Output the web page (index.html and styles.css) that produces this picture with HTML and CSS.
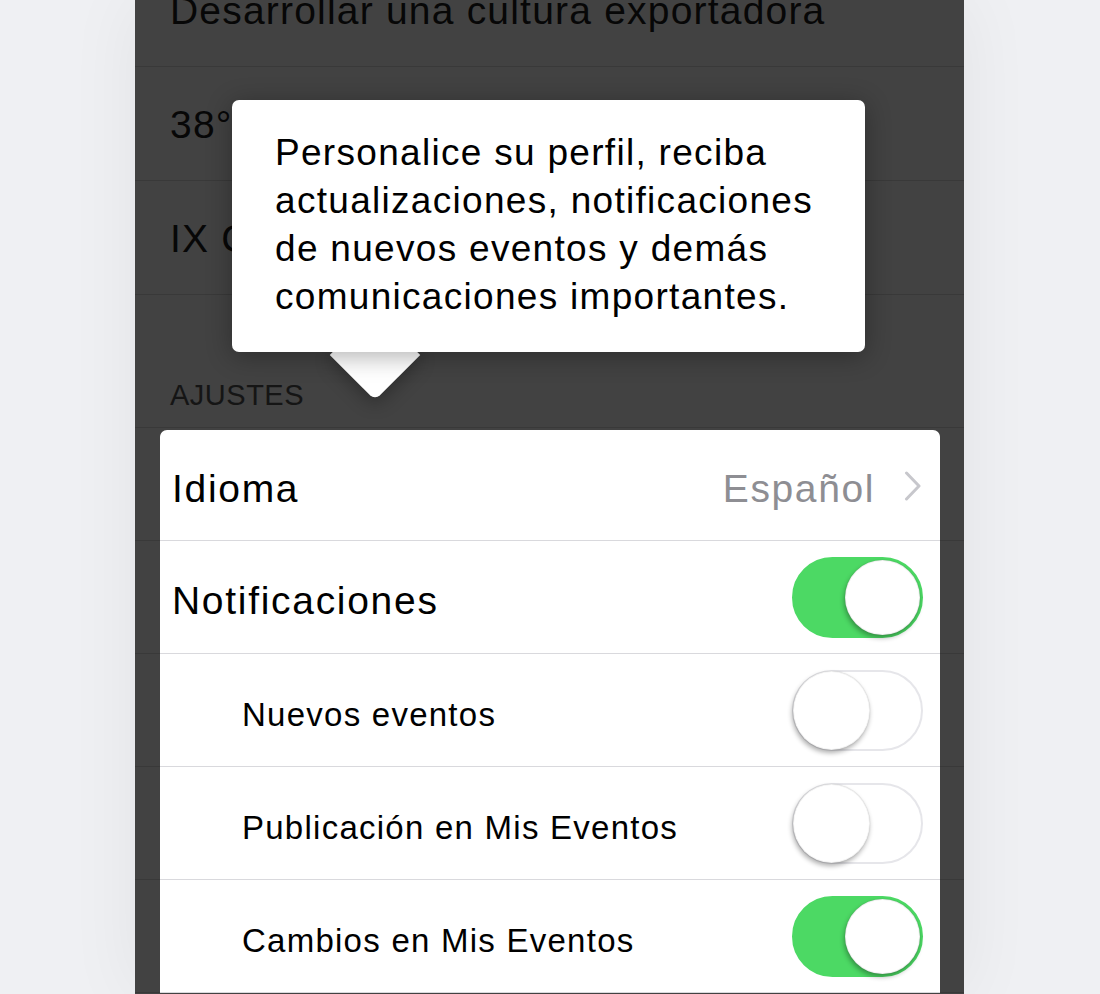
FILE: index.html
```html
<!DOCTYPE html>
<html lang="es">
<head>
<meta charset="utf-8">
<title>Ajustes</title>
<link rel="stylesheet" href="styles.css">
</head>
<body>
<div class="screen">
  <div class="list">
    <div class="drow drow-first">Desarrollar una cultura exportadora</div>
    <div class="drow">38° Congreso Nacional</div>
    <div class="drow">IX Cumbre Exportadora</div>
    <div class="section-header">AJUSTES</div>

    <div class="srow srow-first">
      <div class="cell cell-first">
        <span class="label">Idioma</span>
        <span class="detail">Español</span>
        <svg class="chevron" width="18" height="30" viewBox="0 0 18 30"><path d="M2.5 2 L15 15 L2.5 28" fill="none" stroke="#c7c7cc" stroke-width="3" stroke-linecap="round" stroke-linejoin="round"/></svg>
      </div>
    </div>
    <div class="srow">
      <div class="cell">
        <span class="label">Notificaciones</span>
        <span class="switch on"><span class="knob"></span></span>
      </div>
    </div>
    <div class="srow">
      <div class="cell sub">
        <span class="label">Nuevos eventos</span>
        <span class="switch"><span class="knob"></span></span>
      </div>
    </div>
    <div class="srow">
      <div class="cell sub">
        <span class="label">Publicación en Mis Eventos</span>
        <span class="switch"><span class="knob"></span></span>
      </div>
    </div>
    <div class="srow">
      <div class="cell sub">
        <span class="label">Cambios en Mis Eventos</span>
        <span class="switch on"><span class="knob"></span></span>
      </div>
    </div>
  </div>

  <div class="tip">
    <span class="tip-arrow"></span>
    <div class="tip-box">Personalice su perfil, reciba actualizaciones, notificaciones de nuevos eventos y demás comunicaciones importantes.</div>
  </div>
</div>
</body>
</html>
```

FILE: styles.css
```css
html, body {
  margin: 0;
  padding: 0;
}

body {
  width: 1100px;
  height: 994px;
  overflow: hidden;
  background: #eff0f3;
  font-family: "Liberation Sans", Arial, Helvetica, sans-serif;
}

.screen {
  position: relative;
  width: 829px;
  height: 994px;
  margin-left: 135px;
  background: #424242;
  box-shadow: 0 0 70px rgba(0, 0, 0, 0.06);
  overflow: hidden;
}

.list {
  display: flex;
  flex-direction: column;
  margin-top: -47px;
}

.drow {
  height: 113px;
  flex: none;
  box-sizing: border-box;
  display: flex;
  align-items: center;
  padding: 3px 0 0 35px;
  border-bottom: 1px solid #393939;
  box-sizing: content-box;
  height: 110px;
  font-size: 39px;
  letter-spacing: 1.2px;
  color: #070707;
  white-space: nowrap;
}

.section-header {
  height: 133px;
  flex: none;
  box-sizing: border-box;
  display: flex;
  align-items: flex-end;
  padding: 0 0 15px 35px;
  border-bottom: 1px solid #393939;
  font-size: 29px;
  line-height: 34px;
  letter-spacing: 0.5px;
  color: #151515;
}

.srow {
  flex: none;
  padding: 0 24px 0 25px;
  border-bottom: 1px solid #393939;
}

.srow-first {
  padding-top: 2px;
}

.cell {
  height: 112px;
  display: flex;
  align-items: center;
  padding: 0 17px 0 12px;
  background: #ffffff;
  box-shadow: 0 1px 0 #d9d9dd;
}

.cell-first {
  height: 110px;
  border-radius: 7px 7px 0 0;
  padding-right: 18px;
}

.label {
  flex: 1;
  padding-top: 8px;
  font-size: 39px;
  letter-spacing: 1.7px;
  color: #000000;
  white-space: nowrap;
}

.sub {
  padding-left: 82px;
}

.sub .label {
  padding-top: 9px;
  font-size: 33px;
  letter-spacing: 1.25px;
}

.detail {
  padding-top: 8px;
  font-size: 39px;
  letter-spacing: 1.6px;
  color: #8e8e93;
  margin-right: 29px;
}

.chevron {
  display: block;
  margin-top: 2px;
}

.switch {
  position: relative;
  flex: none;
  box-sizing: border-box;
  width: 131px;
  height: 81px;
  border-radius: 41px;
  border: 2px solid #e6e6ea;
  background: #ffffff;
}

.switch .knob {
  position: absolute;
  top: -1px;
  left: -1px;
  width: 77px;
  height: 79px;
  box-sizing: border-box;
  border-radius: 50%;
  background: #ffffff;
  border: 1px solid rgba(0, 0, 0, 0.06);
  box-shadow: -1px 3px 5px rgba(0, 0, 0, 0.32), 0 0 1px rgba(0, 0, 0, 0.2);
}

.switch.on {
  border-color: #4cd964;
  background: #4cd964;
}

.switch.on .knob {
  top: 1px;
  left: auto;
  right: 1px;
  width: 75px;
  height: 75px;
}

.tip {
  position: absolute;
  left: 97px;
  top: 100px;
  width: 633px;
  height: 252px;
}

.tip-arrow {
  position: absolute;
  left: 111px;
  top: 223px;
  width: 64px;
  height: 64px;
  background: #ffffff;
  transform: rotate(45deg);
  border-bottom-right-radius: 7px;
  box-shadow: 4px 4px 18px rgba(0, 0, 0, 0.3);
}

.tip-box {
  position: relative;
  box-sizing: border-box;
  width: 633px;
  height: 252px;
  padding: 29px 40px 0 43px;
  background: #ffffff;
  border-radius: 7px;
  box-shadow: 0 4px 26px rgba(0, 0, 0, 0.32);
  font-size: 37px;
  line-height: 48px;
  letter-spacing: 1.3px;
  color: #000000;
}
```
